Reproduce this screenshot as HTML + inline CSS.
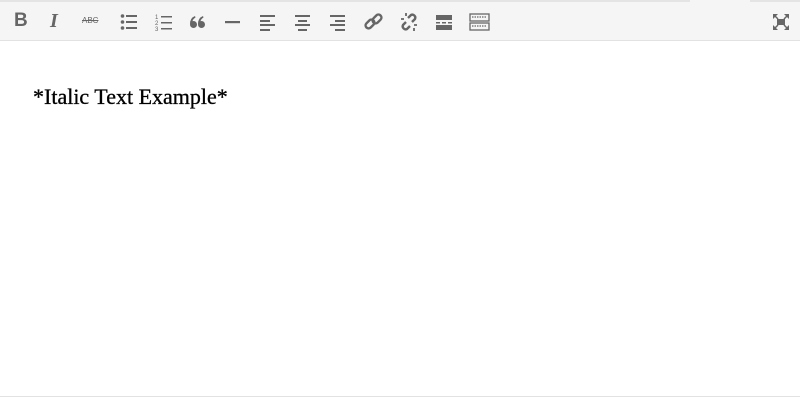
<!DOCTYPE html>
<html><head><style>
body{margin:0;width:800px;height:400px;background:#fff;position:relative;overflow:hidden;font-family:"Liberation Sans",sans-serif}
.tb{position:absolute;left:0;top:0;width:800px;height:40px;background:#f5f5f5;border-bottom:1px solid #e2e2e2}
.top{position:absolute;top:0;height:2px;background:#e4e4e4}
svg{position:absolute;top:12px}
.t{position:absolute;left:33px;top:84px;font-family:"Liberation Serif",serif;font-size:22px;color:#000;-webkit-text-stroke:0.3px #000}
.bot{position:absolute;left:0;top:396px;width:800px;height:1px;background:#e2e2e2}
</style></head><body>
<div class="tb"></div>
<div class="top" style="left:0;width:690px"></div>
<div class="top" style="left:750px;width:50px"></div>
<div style="position:absolute;left:14px;top:10px;font:bold 19px 'Liberation Sans';color:#666">B</div>
<div style="position:absolute;left:50px;top:10px;font:italic bold 20px 'Liberation Serif';color:#666">I</div>
<div style="position:absolute;left:82px;top:16px;font:8px 'Liberation Sans';color:#666;text-decoration:line-through">ABC</div>
<svg style="left:120px" width="18" height="20"><g fill="#666"><circle cx="2.5" cy="4" r="1.8"/><circle cx="2.5" cy="10" r="1.8"/><circle cx="2.5" cy="16" r="1.8"/><rect x="6" y="3" width="11" height="2"/><rect x="6" y="9" width="11" height="2"/><rect x="6" y="15" width="11" height="2"/></g></svg>
<svg style="left:155px" width="18" height="20"><g fill="#666"><text x="0" y="7" font-size="6" font-family="Liberation Sans">1</text><text x="0" y="13" font-size="6" font-family="Liberation Sans">2</text><text x="0" y="19" font-size="6" font-family="Liberation Sans">3</text><rect x="6" y="4" width="11" height="1.5"/><rect x="6" y="10" width="11" height="1.5"/><rect x="6" y="16" width="11" height="1.5"/></g></svg>
<svg style="left:189px" width="18" height="20"><g fill="#666"><circle cx="4.5" cy="12.5" r="3.5"/><circle cx="12.5" cy="12.5" r="3.5"/><path d="M1 12 Q1 6 6 4 L6.5 5.5 Q3 7.5 3.5 11z M9 12 Q9 6 14 4 L14.5 5.5 Q11 7.5 11.5 11z"/></g></svg>
<svg style="left:224px" width="18" height="20"><rect x="1" y="9" width="15" height="2.2" fill="#666"/></svg>
<svg style="left:259px" width="18" height="20"><g fill="#666"><rect x="1" y="3" width="15" height="2"/><rect x="1" y="8" width="10" height="2"/><rect x="1" y="12" width="15" height="2"/><rect x="1" y="17" width="10" height="2"/></g></svg>
<svg style="left:294px" width="18" height="20"><g fill="#666"><rect x="1" y="3" width="15" height="2"/><rect x="4" y="8" width="9" height="2"/><rect x="1" y="12" width="15" height="2"/><rect x="4" y="17" width="9" height="2"/></g></svg>
<svg style="left:329px" width="18" height="20"><g fill="#666"><rect x="1" y="3" width="15" height="2"/><rect x="6" y="8" width="10" height="2"/><rect x="1" y="12" width="15" height="2"/><rect x="6" y="17" width="10" height="2"/></g></svg>
<svg style="left:364px" width="20" height="20"><g fill="none" stroke="#666" stroke-width="2.4"><rect x="1" y="9" width="10" height="6" rx="3" transform="rotate(-45 6 12)"/><rect x="8" y="4" width="10" height="6" rx="3" transform="rotate(-45 13 7)"/></g></svg>
<svg style="left:399px" width="20" height="20"><g fill="none" stroke="#666" stroke-width="2.4"><path d="M7 10 L4 13 a3 3 0 0 0 4 4 L11 14"/><path d="M13 10 L16 7 a3 3 0 0 0 -4 -4 L9 6"/><path d="M2 7h3M7 1v3M15 16v3M18 13h-3" stroke-width="1.8"/></g></svg>
<svg style="left:435px" width="18" height="20"><g fill="#666"><rect x="1" y="3" width="16" height="5"/><rect x="1" y="10" width="4" height="1.5"/><rect x="7" y="10" width="4" height="1.5"/><rect x="13" y="10" width="4" height="1.5"/><rect x="1" y="13" width="16" height="5"/></g></svg>
<svg style="left:469px" width="21" height="20"><g fill="none" stroke="#666" stroke-width="1.3"><rect x="1" y="2" width="19" height="7"/><rect x="1" y="11" width="19" height="7"/><path d="M3 5h15M3 14h15" stroke-dasharray="1.5 1"/></g></svg>
<svg style="left:772px" width="18" height="20"><g fill="#666"><rect x="5" y="7" width="8" height="6"/><path d="M1 2h5l-5 5zM17 2h-5l5 5zM1 18h5l-5-5zM17 18h-5l5-5z"/><path d="M2 3l4 4M16 3l-4 4M2 17l4-4M16 17l-4-4" stroke="#666" stroke-width="1.5"/></g></svg>
<div class="t">*Italic Text Example*</div>
<div class="bot"></div>
</body></html>
